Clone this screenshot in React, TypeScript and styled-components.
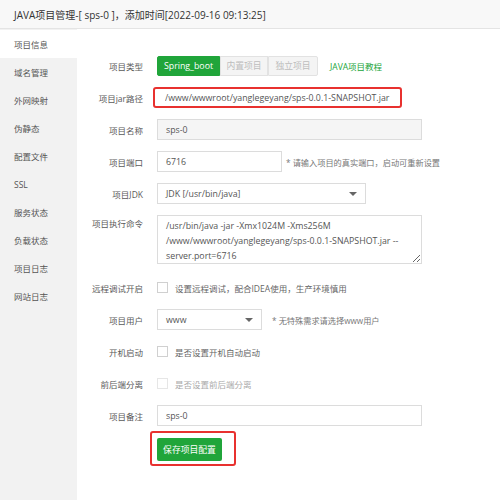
import * as React from "react";
import styled, { createGlobalStyle } from "styled-components";

const GlobalStyle = createGlobalStyle`
  html, body {
    margin: 0;
    padding: 0;
    background: #fff;
  }
  body {
    font-family: "Open Sans", "Noto Sans CJK SC", sans-serif;
    color: #555;
  }
  * {
    box-sizing: border-box;
  }
`;

const Page = styled.div`
  width: 500px;
  height: 500px;
  display: flex;
  flex-direction: column;
  overflow: hidden;
`;

const Header = styled.div`
  height: 29px;
  flex: none;
  display: flex;
  align-items: center;
  padding-left: 14px;
  background: #f8f8f8;
  border-bottom: 1px solid #e4e4e4;
  font-size: 10px;
  color: #333;
`;

const Body = styled.div`
  flex: 1;
  display: flex;
`;

const Sidebar = styled.ul`
  width: 77px;
  flex: none;
  margin: 0;
  padding: 1px 0 0;
  list-style: none;
  background: #f2f2f2;
`;

const NavItem = styled.li<{ $active?: boolean }>`
  height: 28px;
  display: flex;
  align-items: center;
  padding-left: 14px;
  font-size: 8.5px;
  color: #555;
  background: ${(p) => (p.$active ? "#fff" : "transparent")};
`;

const Form = styled.div`
  flex: 1;
  padding-top: 26px;
  display: flex;
  flex-direction: column;
  gap: 11px;
`;

const Row = styled.div<{ $top?: number; $align?: string }>`
  display: flex;
  align-items: ${(p) => p.$align || "center"};
  min-height: 21px;
  margin-top: ${(p) => p.$top || 0}px;
`;

const Label = styled.div<{ $pad?: number }>`
  width: 66px;
  flex: none;
  margin-right: 14px;
  text-align: right;
  font-size: 8.5px;
  color: #5a5a5a;
  white-space: nowrap;
  padding-top: ${(p) => p.$pad || 0}px;
`;

const Input = styled.input<{ $w: number; $mark?: boolean }>`
  width: ${(p) => p.$w}px;
  height: 21px;
  margin-left: ${(p) => (p.$mark ? "-4px" : "0")};
  padding: 0 ${(p) => (p.$mark ? "10px" : "8px")};
  border: ${(p) => (p.$mark ? "2px solid #e8312f" : "1px solid #dcdcdc")};
  border-radius: ${(p) => (p.$mark ? "3px" : "0")};
  font-family: inherit;
  font-size: 8.8px;
  color: #555;
  background: #fff;
  outline: none;

  &:disabled {
    background: #f5f5f5;
    color: #555;
  }
`;

const SelectBox = styled.div<{ $w: number }>`
  width: ${(p) => p.$w}px;
  height: 21px;
  padding: 0 8px;
  display: flex;
  align-items: center;
  justify-content: space-between;
  border: 1px solid #dcdcdc;
  font-size: 8.8px;
  color: #555;
`;

const Caret = styled.span`
  width: 0;
  height: 0;
  border-left: 4px solid transparent;
  border-right: 4px solid transparent;
  border-top: 4px solid #666;
`;

const TypeGroup = styled.div`
  display: flex;
`;

const TypeButton = styled.div<{ $active?: boolean; $w: number }>`
  width: ${(p) => p.$w}px;
  height: 20px;
  display: flex;
  align-items: center;
  justify-content: center;
  font-size: 8.8px;
  border: 1px solid ${(p) => (p.$active ? "#20a53a" : "#e2e2e2")};
  background: ${(p) => (p.$active ? "#20a53a" : "#f4f4f4")};
  color: ${(p) => (p.$active ? "#fff" : "#bdbdbd")};
  border-radius: ${(p) => (p.$active ? "2px 0 0 2px" : "0")};
  &:last-child {
    border-radius: 0 2px 2px 0;
  }
`;

const Link = styled.a`
  margin-left: 12px;
  font-size: 8.5px;
  color: #20a53a;
  text-decoration: none;
`;

const Hint = styled.span<{ $gap: number }>`
  margin-left: ${(p) => p.$gap}px;
  font-size: 8.2px;
  color: #777;
  white-space: nowrap;
`;

const TextArea = styled.textarea`
  width: 265px;
  height: 49px;
  padding: 3px 8px;
  border: 1px solid #dcdcdc;
  font-family: inherit;
  font-size: 8.8px;
  line-height: 15px;
  color: #555;
  resize: both;
  outline: none;
  overflow: hidden;
`;

const Check = styled.label<{ $disabled?: boolean }>`
  display: flex;
  align-items: center;
  font-size: 8.5px;
  color: ${(p) => (p.$disabled ? "#aaa" : "#666")};
`;

const Box = styled.span<{ $disabled?: boolean }>`
  width: 11px;
  height: 11px;
  margin-right: 7px;
  border: 1px solid ${(p) => (p.$disabled ? "#e6e6e6" : "#d0d0d0")};
  background: #fff;
`;

const SaveRow = styled.div`
  display: flex;
  padding-left: 73px;
  margin-top: -6px;
`;

const Mark = styled.div`
  padding: 3px 12px 3px 5px;
  border: 2px solid #e8312f;
  border-radius: 3px;
`;

const SaveButton = styled.button`
  width: 65px;
  height: 23px;
  border: none;
  border-radius: 2px;
  background: #20a53a;
  color: #fff;
  font-family: inherit;
  font-size: 8.8px;
  padding: 0;
`;

const navItems = [
  "项目信息",
  "域名管理",
  "外网映射",
  "伪静态",
  "配置文件",
  "SSL",
  "服务状态",
  "负载状态",
  "项目日志",
  "网站日志",
];

const command =
  "/usr/bin/java -jar -Xmx1024M -Xms256M\n/www/wwwroot/yanglegeyang/sps-0.0.1-SNAPSHOT.jar --\nserver.port=6716";

export default function App() {
  return (
    <Page>
      <GlobalStyle />
      <Header>JAVA项目管理-[ sps-0 ]，添加时间[2022-09-16 09:13:25]</Header>
      <Body>
        <Sidebar>
          {navItems.map((item, i) => (
            <NavItem key={item} $active={i === 0}>
              {item}
            </NavItem>
          ))}
        </Sidebar>
        <Form>
          <Row>
            <Label>项目类型</Label>
            <TypeGroup>
              <TypeButton $active $w={63}>Spring_boot</TypeButton>
              <TypeButton $w={48}>内置项目</TypeButton>
              <TypeButton $w={50}>独立项目</TypeButton>
            </TypeGroup>
            <Link href="#">JAVA项目教程</Link>
          </Row>
          <Row>
            <Label>项目jar路径</Label>
            <Input
              $w={249}
              $mark
              readOnly
              value="/www/wwwroot/yanglegeyang/sps-0.0.1-SNAPSHOT.jar"
            />
          </Row>
          <Row>
            <Label>项目名称</Label>
            <Input $w={265} disabled value="sps-0" />
          </Row>
          <Row>
            <Label>项目端口</Label>
            <Input $w={125} readOnly value="6716" />
            <Hint $gap={4}>* 请输入项目的真实端口，启动可重新设置</Hint>
          </Row>
          <Row>
            <Label>项目JDK</Label>
            <SelectBox $w={209}>
              JDK [/usr/bin/java]
              <Caret />
            </SelectBox>
          </Row>
          <Row $align="flex-start">
            <Label $pad={2}>项目执行命令</Label>
            <TextArea readOnly value={command} />
          </Row>
          <Row $top={2}>
            <Label>远程调试开启</Label>
            <Check>
              <Box />
              设置远程调试，配合IDEA使用，生产环境慎用
            </Check>
          </Row>
          <Row>
            <Label>项目用户</Label>
            <SelectBox $w={105}>
              www
              <Caret />
            </SelectBox>
            <Hint $gap={10}>* 无特殊需求请选择www用户</Hint>
          </Row>
          <Row>
            <Label>开机启动</Label>
            <Check>
              <Box />
              是否设置开机自动启动
            </Check>
          </Row>
          <Row>
            <Label>前后端分离</Label>
            <Check $disabled>
              <Box $disabled />
              是否设置前后端分离
            </Check>
          </Row>
          <Row>
            <Label>项目备注</Label>
            <Input $w={265} readOnly value="sps-0" />
          </Row>
          <SaveRow>
            <Mark>
              <SaveButton>保存项目配置</SaveButton>
            </Mark>
          </SaveRow>
        </Form>
      </Body>
    </Page>
  );
}
